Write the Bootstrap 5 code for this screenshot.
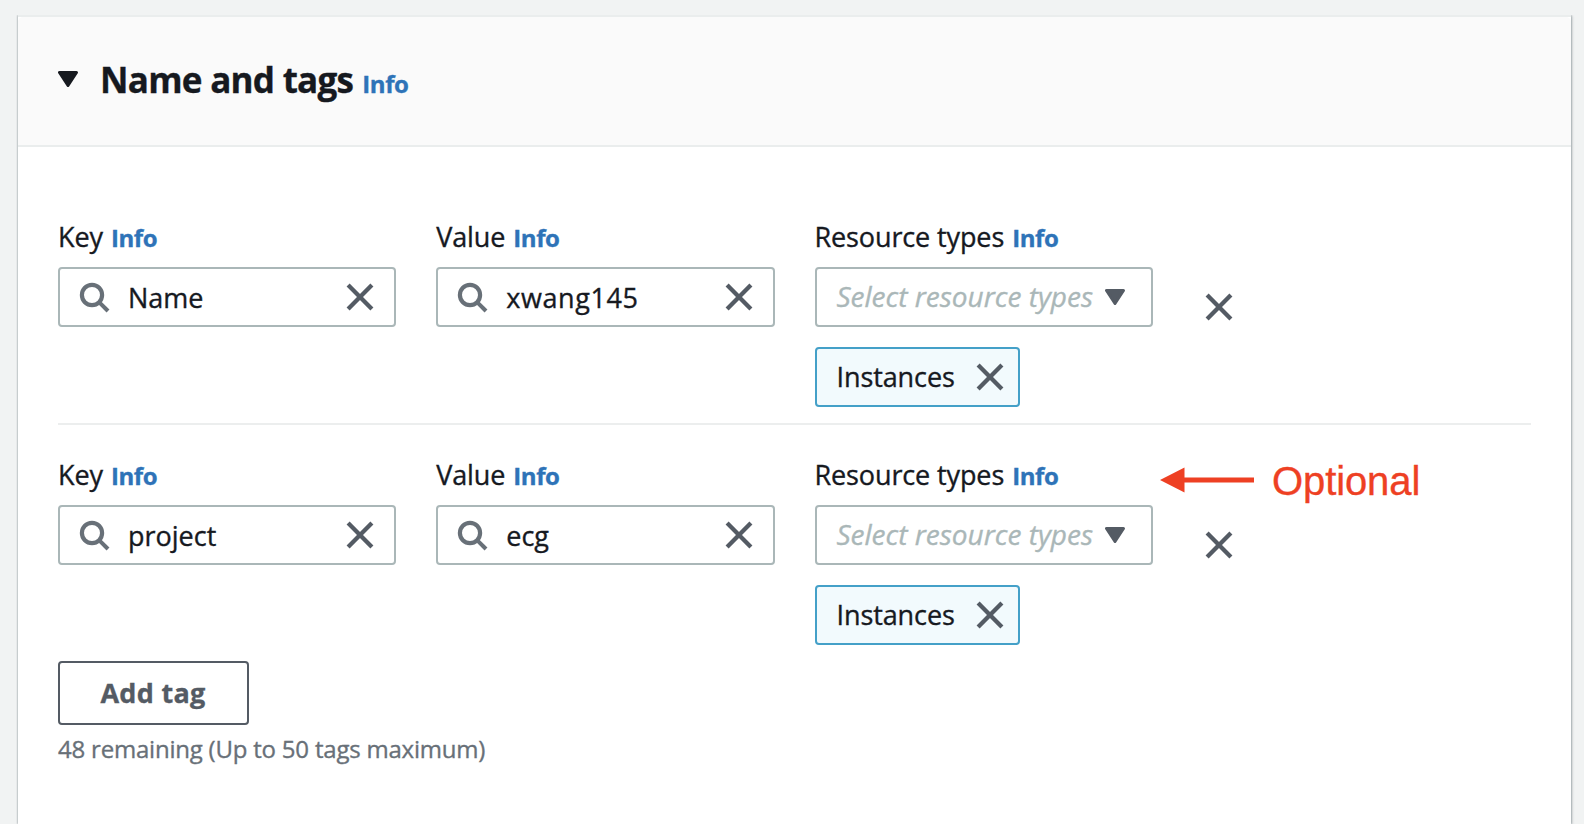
<!DOCTYPE html>
<html lang="en">
<head>
<meta charset="utf-8">
<meta name="viewport" content="width=device-width, initial-scale=1">
<title>Name and tags</title>
<link href="https://cdn.jsdelivr.net/npm/bootstrap@5.3.0/dist/css/bootstrap.min.css" rel="stylesheet">
<style>
  body { background: #f1f3f3; font-family: "Open Sans", "Noto Sans", sans-serif; font-size: 27px; line-height: 40px; color: #16191f; height: 824px; overflow: hidden; padding: 15px 13px 0 18px; -webkit-text-stroke: .35px currentColor; }
  .panel { height: 809px; border: 0; border-top: 2px solid #eaeded; border-radius: 0; color: inherit; box-shadow: 0 0 2px 0 rgba(0,28,36,.45), 1px 1px 3px 0 rgba(0,28,36,.2); clip-path: inset(0 -6px 0 -6px); }
  .panel-head { height: 130px; background: #fafafa; border-bottom: 2px solid #eaeded; padding: 0 40px 5px; border-radius: 0; }
  .panel-title { font-size: 35px; font-weight: 700; letter-spacing: -.72px; line-height: 48px; margin: 0 0 0 22px; }
  .panel-head .title-line { margin-top: 2px; }
  .info { color: #2e73b8; font-size: 24px; font-weight: 700; text-decoration: none; letter-spacing: -.4px; margin-left: 8px; }
  .panel-head .info { margin-left: 9px; }
  .panel-main { padding: 70px 40px 0; }
  .tag-row { --bs-gutter-x: 40px; position: relative; }
  .lbl { display: flex; align-items: baseline; letter-spacing: -.12px; margin-bottom: 10px; height: 40px; }
  .field { height: 60px; border: 2px solid #aab7b8; border-radius: 4px; background: #fff; padding: 0 20px 0 18px; }
  .field .txt { margin-left: 18px; padding-top: 2px; }
  .field.select-field { padding-right: 26px; }
  .placeholder-txt { font-style: italic; font-size: 28px; color: #aab7b8; margin-left: 2px; padding-bottom: 2px; }
  .chip { height: 60px; border: 2px solid #44a0c8; border-radius: 4px; background: #f2fafd; padding: 0 14px 0 20px; margin-top: 20px; gap: 21px; letter-spacing: -.1px; }
  .rule { height: 2px; background: #eceeee; margin: 16px 0 30px; }
  .remove { margin: 76px 0 0 12px; display: block; }
  .add { height: 64px; width: 191px; border: 2px solid #545b64; border-radius: 4px; color: #545b64; font-size: 27px; font-weight: 700; letter-spacing: .3px; line-height: 40px; padding: 0 1px 0 0; margin-top: 16px; background: #fff; }
  .hint { font-size: 24px; line-height: 36px; color: #687078; letter-spacing: -.21px; margin-top: 6px; }
  .note { position: absolute; left: 1122px; top: 1px; width: auto; padding: 0; color: #ee4023; font: 40px/46px "Liberation Sans", sans-serif; letter-spacing: -.1px; }
  .note-text { margin-left: 18px; padding-top: 2px; }
  svg { flex: none; }
</style>
</head>
<body>
<svg width="0" height="0" class="position-absolute">
  <symbol id="x" viewBox="0 0 28 28"><path d="M2.1 2.1 25.9 25.9M25.9 2.1 2.1 25.9" fill="none" stroke="#545b64" stroke-width="4.3"/></symbol>
  <symbol id="search" viewBox="0 0 32 32"><circle cx="14" cy="14" r="10.1" fill="none" stroke="#687078" stroke-width="4.2"/><path d="M20.8 20.8 30 30" stroke="#687078" stroke-width="4"/></symbol>
  <symbol id="caret" viewBox="0 0 20 16"><path d="M1.5 1.5h17L10 14.5Z" fill="currentColor" stroke="currentColor" stroke-width="3" stroke-linejoin="round"/></symbol>
</svg>

<main class="card panel">
  <div class="card-header panel-head d-flex align-items-center">
    <svg width="20" height="16"><use href="#caret"/></svg>
    <div class="title-line d-flex align-items-baseline">
      <h2 class="panel-title">Name and tags</h2><a class="info" href="#">Info</a>
    </div>
  </div>
  <div class="panel-main">

    <div class="row tag-row">
      <div class="col-3">
        <div class="lbl">Key<a class="info" href="#">Info</a></div>
        <div class="field d-flex align-items-center"><svg width="32" height="32"><use href="#search"/></svg><span class="txt">Name</span><svg class="ms-auto" width="28" height="28"><use href="#x"/></svg></div>
      </div>
      <div class="col-3">
        <div class="lbl">Value<a class="info" href="#">Info</a></div>
        <div class="field d-flex align-items-center"><svg width="32" height="32"><use href="#search"/></svg><span class="txt" style="letter-spacing:.6px">xwang145</span><svg class="ms-auto" width="28" height="28"><use href="#x"/></svg></div>
      </div>
      <div class="col-3">
        <div class="lbl">Resource types<a class="info" href="#">Info</a></div>
        <div class="field select-field d-flex align-items-center"><span class="placeholder-txt">Select resource types</span><svg width="20" height="16" class="ms-auto" color="#545b64"><use href="#caret"/></svg></div>
        <div class="chip d-inline-flex align-items-center">Instances<svg width="28" height="28"><use href="#x"/></svg></div>
      </div>
      <div class="col-3"><svg class="remove" width="28" height="28"><use href="#x"/></svg></div>
    </div>

    <div class="rule"></div>

    <div class="row tag-row">
      <div class="col-3">
        <div class="lbl">Key<a class="info" href="#">Info</a></div>
        <div class="field d-flex align-items-center"><svg width="32" height="32"><use href="#search"/></svg><span class="txt">project</span><svg class="ms-auto" width="28" height="28"><use href="#x"/></svg></div>
      </div>
      <div class="col-3">
        <div class="lbl">Value<a class="info" href="#">Info</a></div>
        <div class="field d-flex align-items-center"><svg width="32" height="32"><use href="#search"/></svg><span class="txt">ecg</span><svg class="ms-auto" width="28" height="28"><use href="#x"/></svg></div>
      </div>
      <div class="col-3">
        <div class="lbl">Resource types<a class="info" href="#">Info</a></div>
        <div class="field select-field d-flex align-items-center"><span class="placeholder-txt">Select resource types</span><svg width="20" height="16" class="ms-auto" color="#545b64"><use href="#caret"/></svg></div>
        <div class="chip d-inline-flex align-items-center">Instances<svg width="28" height="28"><use href="#x"/></svg></div>
      </div>
      <div class="col-3"><svg class="remove" width="28" height="28"><use href="#x"/></svg></div>
      <div class="note d-flex align-items-center">
        <svg width="94" height="26" viewBox="0 0 94 26"><path d="M0 13 24.5 .5v10h69.5v5H24.5v10Z" fill="#ee4023"/></svg>
        <span class="note-text">Optional</span>
      </div>
    </div>

    <button class="btn add d-block" type="button">Add tag</button>
    <div class="hint">48 remaining (Up to 50 tags maximum)</div>
  </div>
</main>
<script src="https://cdn.jsdelivr.net/npm/bootstrap@5.3.0/dist/js/bootstrap.bundle.min.js"></script>
</body>
</html>
